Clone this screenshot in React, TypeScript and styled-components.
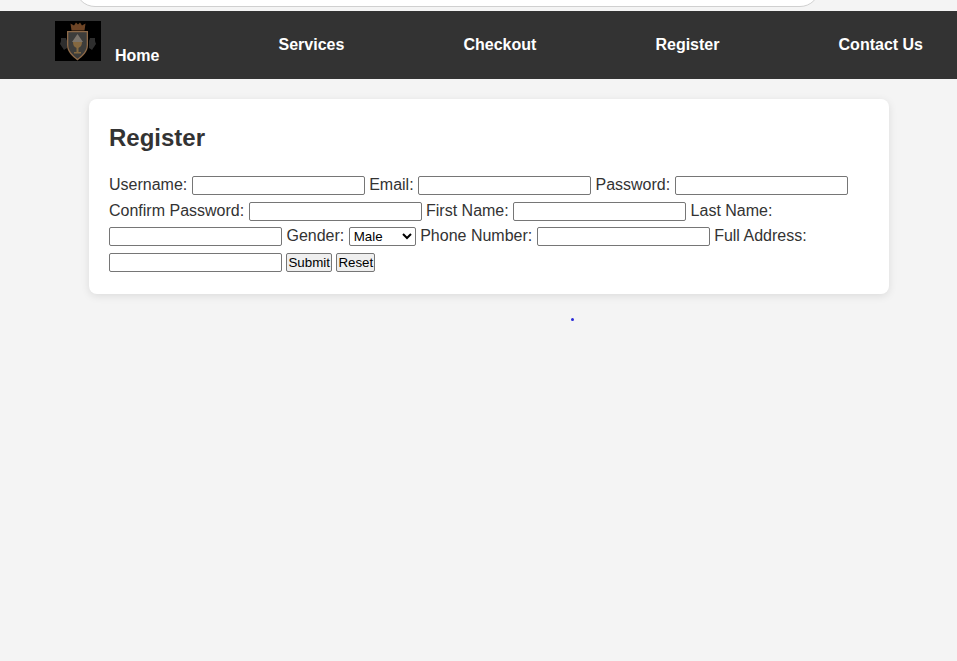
import React from "react";
import styled, { createGlobalStyle } from "styled-components";

const Global = createGlobalStyle`
  html, body { margin: 0; padding: 0; background: #f4f4f4; }
  body { font-family: "Liberation Sans", Arial, sans-serif; color: #333; font-size: 16px; }
`;

const TopStrip = styled.div`
  height: 11px;
  padding: 0 137px 0 75px;
  box-sizing: border-box;
  overflow: hidden;
`;

const SearchEdge = styled.div`
  height: 40px;
  margin-top: -33px;
  box-sizing: border-box;
  background: #fff;
  border: 1px solid #d0d0d0;
  border-radius: 20px;
`;

const Nav = styled.nav`
  height: 68px;
  background: #333;
  box-sizing: border-box;
  padding: 0 34px 0 55px;
  display: flex;
  justify-content: space-between;
`;

const HomeItem = styled.div`
  display: flex;
  align-items: flex-end;
  gap: 14px;
  padding-top: 10px;
  height: 40px;
`;

const NavLink = styled.a`
  color: #fff;
  font-weight: 700;
  font-size: 16px;
  line-height: 18px;
  text-decoration: none;
`;

const HomeLink = styled(NavLink)`
  margin-bottom: -4px;
`;

const PlainItem = styled.div`
  padding-top: 25px;
`;

const Card = styled.main`
  width: 800px;
  box-sizing: border-box;
  margin: 20px 0 0 89px;
  padding: 20px;
  background: #fff;
  border-radius: 8px;
  box-shadow: 0 2px 8px rgba(0, 0, 0, 0.1);
`;

const Title = styled.h2`
  margin: 0 0 15px;
  font-size: 24px;
  line-height: 38px;
  font-weight: 700;
  color: #333;
`;

const Form = styled.form`
  line-height: 25.5px;
  color: #333;
`;

const TextInput = styled.input`
  width: 173px;
  height: 19px;
  box-sizing: border-box;
  border: 1px solid #767676;
  border-radius: 2px;
  padding: 1px 2px;
  background: #fff;
  font: 13.33px "Liberation Sans", Arial, sans-serif;
  vertical-align: 0;
`;

const GenderSelect = styled.select`
  width: 67px;
  height: 19px;
  box-sizing: border-box;
  border: 1px solid #767676;
  border-radius: 2px;
  background: #fff;
  color: #000;
  font: 13.33px "Liberation Sans", Arial, sans-serif;
  vertical-align: 0;
`;

const FormButton = styled.input`
  height: 19px;
  box-sizing: border-box;
  border: 1px solid #767676;
  border-radius: 2px;
  padding: 0 1px;
  background: #efefef;
  color: #000;
  font: 13.33px "Liberation Sans", Arial, sans-serif;
  vertical-align: 0;
`;

const Dot = styled.div`
  width: 3px;
  height: 3px;
  margin: 24px 0 0 571px;
  background: #2a2ad8;
  border-radius: 50%;
`;

const Logo = () => (
  <svg width="46" height="40" viewBox="0 0 46 40" style={{ display: "block" }}>
    <defs>
      <filter id="soft" x="-10%" y="-10%" width="120%" height="120%">
        <feGaussianBlur stdDeviation="0.65" />
      </filter>
    </defs>
    <rect width="46" height="40" fill="#000" />
    <g filter="url(#soft)">
      <path d="M6 17l5 0 1 3v7l-3 2-2-3-2-3 1-3z" fill="#2e2e2e" />
      <path d="M40 17l-5 0-1 3v7l3 2 2-3 2-3-1-3z" fill="#2e2e2e" />
      <path d="M16.500 9.500l-1-7 3.500 2 2-3 2 2 2-2 2 3 3.500-2-1 7z" fill="#6e4526" />
      <path d="M12 10h21v14c0 7-5 11-10.500 15.500C17 35 12 31 12 24z" fill="#8d6a48" />
      <path d="M13.300 11.300h18.400V24c0 6-4 9.500-9.200 13.700-5.200-4.200-9.200-7.700-9.200-13.700z" fill="#3e3c3a" />
      <path d="M22.500 13l5.500 8h-11z" fill="#7c746c" />
      <path d="M18 21h9c0 4-2 5-3.500 6v4h2.500v1.500h-7V31h2.500v-4c-1.500-1-3.500-2-3.500-6z" fill="#84683f" />
    </g>
  </svg>
);

export default function App() {
  return (
    <>
      <Global />
      <TopStrip>
        <SearchEdge />
      </TopStrip>
      <Nav>
        <HomeItem>
          <Logo />
          <HomeLink href="#">Home</HomeLink>
        </HomeItem>
        <PlainItem><NavLink href="#">Services</NavLink></PlainItem>
        <PlainItem><NavLink href="#">Checkout</NavLink></PlainItem>
        <PlainItem><NavLink href="#">Register</NavLink></PlainItem>
        <PlainItem><NavLink href="#">Contact Us</NavLink></PlainItem>
      </Nav>
      <Card>
        <Title>Register</Title>
        <Form onSubmit={(e) => e.preventDefault()}>
          Username: <TextInput type="text" /> Email: <TextInput type="text" /> Password: <TextInput type="password" />{" "}
          Confirm Password: <TextInput type="password" /> First Name: <TextInput type="text" /> Last Name:{" "}
          <TextInput type="text" /> Gender:{" "}
          <GenderSelect defaultValue="Male">
            <option>Male</option>
            <option>Female</option>
          </GenderSelect>{" "}
          Phone Number: <TextInput type="text" /> Full Address: <TextInput type="text" />{" "}
          <FormButton type="submit" value="Submit" /> <FormButton type="reset" value="Reset" />
        </Form>
      </Card>
      <Dot />
    </>
  );
}
